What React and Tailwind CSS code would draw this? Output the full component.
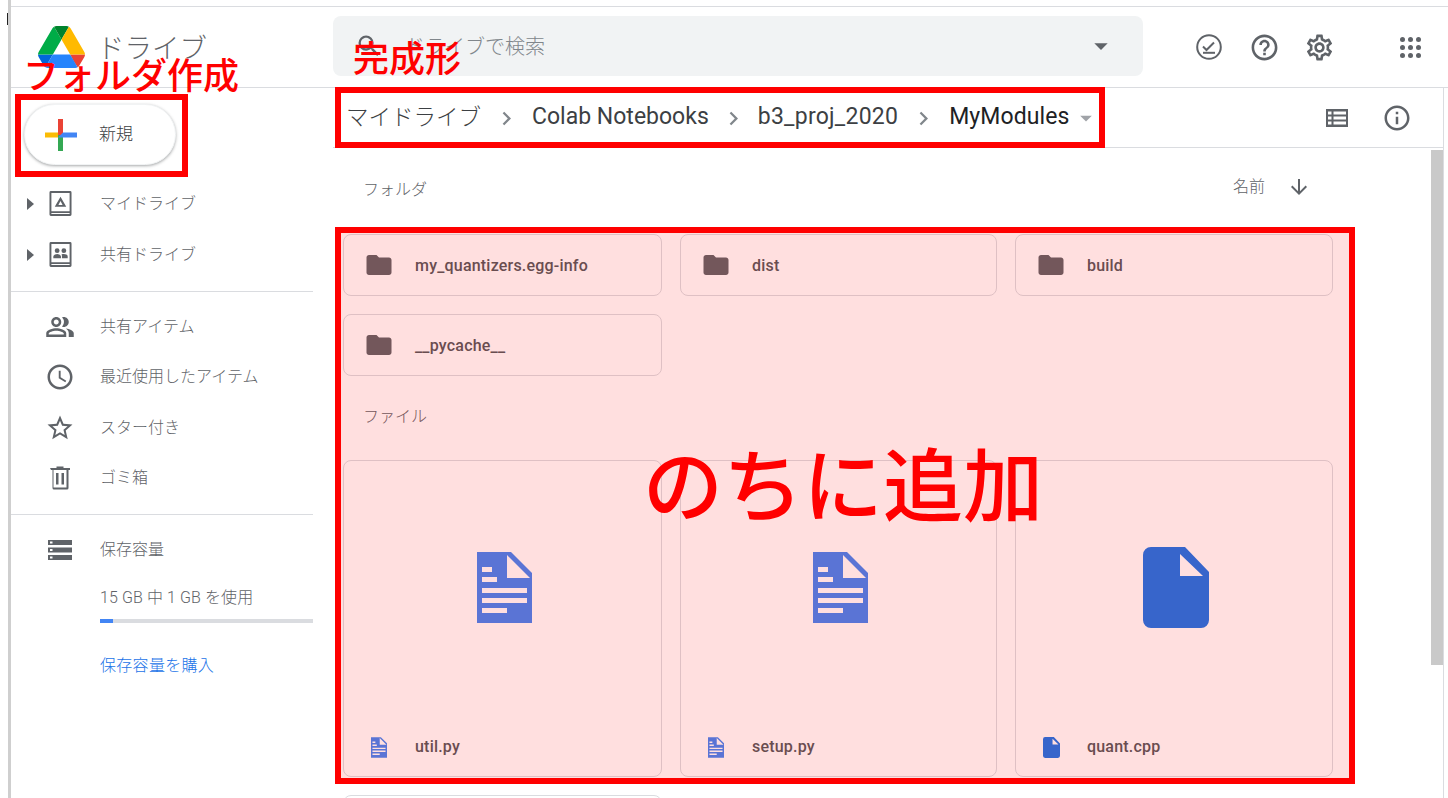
import { MdAccessTime, MdArrowDownward, MdArrowDropDown, MdChevronRight, MdFolder, MdHelpOutline, MdInfoOutline, MdOutlinePeopleAlt, MdOutlineSettings, MdSearch, MdStarBorder } from 'react-icons/md';

const GRAY = '#5f6368';

function DriveLogo() {
  return (
    <svg viewBox="0 0 87.3 78" className="w-[47px] h-[42px] shrink-0">
      <path d="m6.6 66.85 3.85 6.65c.8 1.4 1.95 2.5 3.3 3.3l13.75-23.8h-27.5c0 1.55.4 3.1 1.2 4.5z" fill="#0066da" />
      <path d="m43.65 25-13.75-23.8c-1.35.8-2.5 1.9-3.3 3.3l-25.4 44a9.06 9.06 0 0 0 -1.2 4.5h27.5z" fill="#00ac47" />
      <path d="m73.55 76.8c1.35-.8 2.5-1.9 3.3-3.3l1.6-2.75 7.65-13.25c.8-1.4 1.2-2.95 1.2-4.5h-27.502l5.852 11.5z" fill="#ea4335" />
      <path d="m43.65 25 13.75-23.8c-1.35-.8-2.9-1.2-4.5-1.2h-18.5c-1.6 0-3.15.45-4.5 1.2z" fill="#00832d" />
      <path d="m59.8 53h-32.3l-13.75 23.8c1.35.8 2.9 1.2 4.5 1.2h50.8c1.6 0 3.15-.45 4.5-1.2z" fill="#2684fc" />
      <path d="m73.4 26.5-12.7-22c-.8-1.4-1.95-2.5-3.3-3.3l-13.75 23.8 16.15 28h27.45c0-1.55-.4-3.1-1.2-4.5z" fill="#ffba00" />
    </svg>
  );
}

function PlusIcon() {
  return (
    <svg viewBox="0 0 32 32" className="w-[32px] h-[32px]">
      <rect x="13" y="0" width="5" height="16" fill="#ea4335" />
      <rect x="18" y="13.5" width="14" height="5" fill="#4285f4" />
      <rect x="13" y="16" width="5" height="16" fill="#34a853" />
      <rect x="0" y="13.5" width="13" height="5" fill="#fbbc04" />
      <path d="M13 18.5 18 13.5 18 18.5Z" fill="#4285f4" />
    </svg>
  );
}

function BookIcon({ children }) {
  return (
    <svg viewBox="0 0 24 26" className="w-[23px] h-[25px]">
      <path fillRule="evenodd" fill={GRAY} d="M2 0h20a1.5 1.5 0 0 1 1.500 1.500v23a1.500 1.500 0 0 1-1.500 1.500h-20a1.500 1.500 0 0 1-1.500-1.500v-23a1.500 1.500 0 0 1 1.500-1.500zM2.500 2v19h19v-19zM2.500 23v1h19v-1z" />
      {children}
    </svg>
  );
}

function TrashIcon() {
  return (
    <svg viewBox="0 0 20 24" className="w-[20px] h-[24px]">
      <path fillRule="evenodd" fill={GRAY} d="M0 2h6.500v-1.500h7v1.500h6.500v2h-1.500v18a1.500 1.500 0 0 1-1.500 1.500h-13a1.500 1.500 0 0 1-1.500-1.500v-18h-1.500zM3.500 4v17.500h13v-17.500zM6 7h2.500v11.500h-2.500zM11.500 7h2.500v11.500h-2.500z" />
    </svg>
  );
}

function StorageIcon() {
  return (
    <svg viewBox="0 0 24 20" className="w-[24px] h-[20px]">
      <path fillRule="evenodd" fill={GRAY} d="M0 0h24v5h-24zM2 1.500v2h2.500v-2zM0 7.500h24v5h-24zM2 9v2h2.500v-2zM0 15h24v5h-24zM2 16.500v2h2.500v-2z" />
    </svg>
  );
}

function TasksIcon() {
  return (
    <svg viewBox="0 0 26 26" className="w-[26px] h-[26px]" fill="none" stroke={GRAY}>
      <circle cx="13" cy="13" r="11.800" strokeWidth="2" />
      <path d="M7 12.500 10.500 16 18 8.500" strokeWidth="2" />
      <path d="M7 18.800h12" strokeWidth="2" />
    </svg>
  );
}

function ListIcon() {
  return (
    <svg viewBox="0 0 22 18" className="w-[22px] h-[18px]">
      <path fillRule="evenodd" fill={GRAY} d="M0 0h22v18h-22zM2 2.500v3h3.500v-3zM7.500 2.500v3h12.500v-3zM2 7.500v3h3.500v-3zM7.500 7.500v3h12.500v-3zM2 12.500v3h3.500v-3zM7.500 12.500v3h12.500v-3z" />
    </svg>
  );
}

function DocIcon({ className }) {
  return (
    <svg viewBox="0 0 55 71" className={className}>
      <path fillRule="evenodd" fill="#4285f4" d="M0 0h34l21 21v50h-55zM30 3v23h23zM5 15v5h10v-5zM5 25v5h15v-5zM5 36v5h45v-5zM5 46v5h45v-5zM5 56v5h25v-5z" />
    </svg>
  );
}

function FileIcon({ className }) {
  return (
    <svg viewBox="0 0 66 81" className={className}>
      <path fillRule="evenodd" fill="#1a73e8" d="M8 0h34l24 25v48a8 8 0 0 1-8 8h-50a8 8 0 0 1-8-8v-65a8 8 0 0 1 8-8zM37 7v22h23z" />
    </svg>
  );
}

function ArrowRight() {
  return (
    <svg viewBox="0 0 8 12" className="w-[8px] h-[14px]">
      <path d="M0 0 7 6 0 12Z" fill={GRAY} />
    </svg>
  );
}

function NavRow({ icon, label, arrow, className }) {
  return (
    <div className={`flex items-center text-base font-light ${className}`}>
      <div className="w-[12px] ml-[16px] flex justify-start">
        {arrow && <ArrowRight />}
      </div>
      <div className="w-[30px] ml-[6px] flex justify-center">{icon}</div>
      <span className="ml-[25px] text-[#5f6368]">{label}</span>
    </div>
  );
}

function FolderCard({ name }) {
  return (
    <div className="h-[62px] bg-white border border-[#dadce0] rounded-lg flex items-center">
      <MdFolder className="ml-[20px] text-[30px] text-[#5f6368]" />
      <span className="ml-[21px] pt-[1px] text-[16px] tracking-[0.2px] font-medium text-[#54585c]">{name}</span>
    </div>
  );
}

function FileCard({ name, big, small }) {
  return (
    <div className="h-[317px] bg-white border border-[#dadce0] rounded-lg flex flex-col">
      <div className="h-[274px] flex items-center justify-center pl-[3px] pb-[22px]">{big}</div>
      <div className="flex items-center">
        <div className="w-[70px] pl-[27px]">{small}</div>
        <span className="ml-[1px] text-[16px] tracking-[0.2px] font-medium text-[#54585c]">{name}</span>
      </div>
    </div>
  );
}

export default function App() {
  return (
    <div className="relative w-[1448px] h-[798px] overflow-hidden bg-white flex font-['Roboto','Noto_Sans_CJK_JP',sans-serif]">
      <div className="w-[8px] shrink-0 flex justify-end">
        <div className="w-[1px] h-[12px] mt-[13px] bg-[#222222]" />
      </div>
      <div className="w-[3px] shrink-0 bg-[#cfcfcf]" />

      <div className="flex-1 min-w-0 flex flex-col">
        <div className="h-[7px] border-b border-[#dadce0] shrink-0" />

        {/* header */}
        <div className="h-[81px] shrink-0 border-b border-[#dadce0] flex items-center">
          <div className="w-[322px] flex items-center pl-[27px] pb-[1px]">
            <DriveLogo />
            <span className="ml-[12px] text-[27.500px] font-light leading-none text-[#5f6368] translate-y-[2px]">ドライブ</span>
          </div>
          <div className="w-[810px] h-[60px] bg-[#f1f3f4] rounded-lg flex items-center pl-[22px] pr-[26px] -translate-y-[1px]">
            <MdSearch className="text-[28px] text-[#5f6368]" />
            <span className="ml-[22px] text-[20px] font-light text-[#80868b] translate-y-[1px]">ドライブで検索</span>
            <MdArrowDropDown className="ml-auto text-[32px] text-[#5f6368]" />
          </div>
          <div className="flex items-center ml-[53px]">
            <TasksIcon />
            <MdHelpOutline className="ml-[27px] text-[31px] text-[#5f6368]" />
            <MdOutlineSettings className="ml-[24px] text-[31px] text-[#5f6368]" />
            <div className="grid grid-cols-3 gap-[3px] ml-[65px]">
              {[0, 1, 2, 3, 4, 5, 6, 7, 8].map((i) => (
                <div key={i} className="w-[5px] h-[5px] rounded-full bg-[#5f6368]" />
              ))}
            </div>
          </div>
        </div>

        <div className="flex-1 min-h-0 flex">
          {/* sidebar */}
          <div className="w-[322px] shrink-0 flex flex-col">
            <div className="w-[302px] flex flex-col">
              <div className="mt-[16px] ml-[13px] w-[152px] h-[61px] rounded-full bg-white border border-[#f1f3f4] shadow-[0_1px_3px_rgba(60,64,67,0.45)] flex items-center pl-[20px]">
                <PlusIcon />
                <span className="ml-[22px] text-[17px] font-light text-[#3c4043]">新規</span>
              </div>

              <div className="mt-[13px]">
                <NavRow arrow className="h-[51px]" label="マイドライブ" icon={
                  <BookIcon><path fillRule="evenodd" d="M12 6 18 16.500h-12zM12 10.500 9.800 14.500h4.400z" fill={GRAY} /></BookIcon>
                } />
                <NavRow arrow className="h-[51px]" label="共有ドライブ" icon={
                  <BookIcon>
                    <circle cx="8.500" cy="9" r="2.500" fill={GRAY} />
                    <circle cx="15.500" cy="9" r="2.500" fill={GRAY} />
                    <path d="M4.500 17v-2c0-1.500 2.500-2.500 4-2.500s4 1 4 2.500v2zM13.500 17v-3l-.5-1c3-1 6.500 0 6.500 2v2z" fill={GRAY} />
                  </BookIcon>
                } />
              </div>

              <div className="mt-[11px] h-[1px] bg-[#dadce0]" />

              <div className="mt-[10px]">
                <NavRow className="h-[50px]" label="共有アイテム" icon={<MdOutlinePeopleAlt className="text-[32px] text-[#5f6368]" />} />
                <NavRow className="h-[50px]" label="最近使用したアイテム" icon={<MdAccessTime className="text-[30px] text-[#5f6368]" />} />
                <NavRow className="h-[51px]" label="スター付き" icon={<MdStarBorder className="text-[30px] text-[#5f6368]" />} />
                <NavRow className="h-[50px]" label="ゴミ箱" icon={<TrashIcon />} />
              </div>

              <div className="mt-[11px] h-[1px] bg-[#dadce0]" />

              <NavRow className="mt-[10px] h-[50px]" label="保存容量" icon={<StorageIcon />} />

              <div className="ml-[89px] mt-[12px] text-[16px] tracking-[0.1px] leading-[22px] font-light text-[#5f6368]">15 GB 中 1 GB を使用</div>
              <div className="ml-[89px] mt-[10px] h-[4px] bg-[#dadce0]">
                <div className="w-[13px] h-[4px] bg-[#4285f4]" />
              </div>
              <div className="ml-[89px] mt-[32px] text-[16px] tracking-[0.3px] leading-[22px] font-light text-[#1a73e8]">保存容量を購入</div>
            </div>
          </div>

          {/* main */}
          <div className="flex-1 min-w-0 flex flex-col mr-[4px] border-r border-[#dadce0]">
            <div className="h-[60px] shrink-0 border-b border-[#dadce0] flex items-center pl-[13px] text-[23px] text-[#3c4043]">
              <span className="text-[22.500px] font-light">マイドライブ</span>
              <MdChevronRight className="mx-[12px] text-[27px] text-[#80868b] translate-y-[1px]" />
              <span>Colab Notebooks</span>
              <MdChevronRight className="mx-[11px] text-[27px] text-[#80868b] translate-y-[1px]" />
              <span className="tracking-[0.25px]">b3_proj_2020</span>
              <MdChevronRight className="mx-[12px] text-[27px] text-[#80868b] translate-y-[1px]" />
              <span className="text-[#202124] tracking-[0.1px]">MyModules</span>
              <MdArrowDropDown className="ml-[2px] text-[28px] text-[#a0a3a8]" />
              <div className="ml-auto"><ListIcon /></div>
              <MdInfoOutline className="ml-[34px] mr-[31px] text-[30px] text-[#5f6368]" />
            </div>

            <div className="flex-1 min-h-0 flex overflow-hidden">
              <div className="w-[1097px] shrink-0 pl-[10px]">
                <div className="h-[86px] pt-[30px] pl-[20px] pr-[119px] flex justify-between text-base font-light text-[#5f6368]">
                  <span>フォルダ</span>
                  <div className="flex -mt-[3px]">
                    <span>名前</span>
                    <MdArrowDownward className="ml-[22px] text-[24px]" />
                  </div>
                </div>
                <div className="w-[990px] grid grid-cols-[319px_317px_318px] gap-[18px]">
                  <FolderCard name="my_quantizers.egg-info" />
                  <FolderCard name="dist" />
                  <FolderCard name="build" />
                  <FolderCard name="__pycache__" />
                </div>
                <div className="h-[84px] pt-[29px] pl-[20px] text-base font-light text-[#5f6368]">ファイル</div>
                <div className="w-[990px] grid grid-cols-[319px_317px_318px] gap-[18px]">
                  <FileCard name="util.py" big={<DocIcon className="w-[55px] h-[71px]" />} small={<DocIcon className="w-[16px] h-[21px]" />} />
                  <FileCard name="setup.py" big={<DocIcon className="w-[55px] h-[71px]" />} small={<DocIcon className="w-[16px] h-[21px]" />} />
                  <FileCard name="quant.cpp" big={<FileIcon className="w-[66px] h-[81px]" />} small={<FileIcon className="w-[17px] h-[21px]" />} />
                  <div className="h-[62px] bg-white border border-[#dadce0] rounded-lg" />
                </div>
              </div>
              <div className="w-[12px] ml-[1px] mt-[2px] h-[515px] bg-[#c9c9c9]" />
            </div>
          </div>
        </div>
      </div>

      {/* red annotations drawn over the page */}
      <div className="absolute left-[15px] top-[94px] w-[173px] h-[83px] border-[6px] border-[#ff0000]" />
      <div className="absolute left-[335px] top-[87px] w-[770px] h-[61px] border-[6px] border-[#ff0000]" />
      <div className="absolute left-[335px] top-[227px] w-[1020px] h-[557px] border-[6px] border-[#ff0000] bg-[#ff0000]/[0.125] flex items-center justify-center">
        <span className="text-[80px] leading-none font-medium text-[#ff0000] -mt-[36px] -ml-[4px]">のちに追加</span>
      </div>
      <div className="absolute left-[23px] top-[57px] text-[36px] leading-[40px] font-medium text-[#ff0000]">フォルダ作成</div>
      <div className="absolute left-[353px] top-[40px] text-[36px] leading-[40px] font-medium text-[#ff0000]">完成形</div>
    </div>
  );
}
